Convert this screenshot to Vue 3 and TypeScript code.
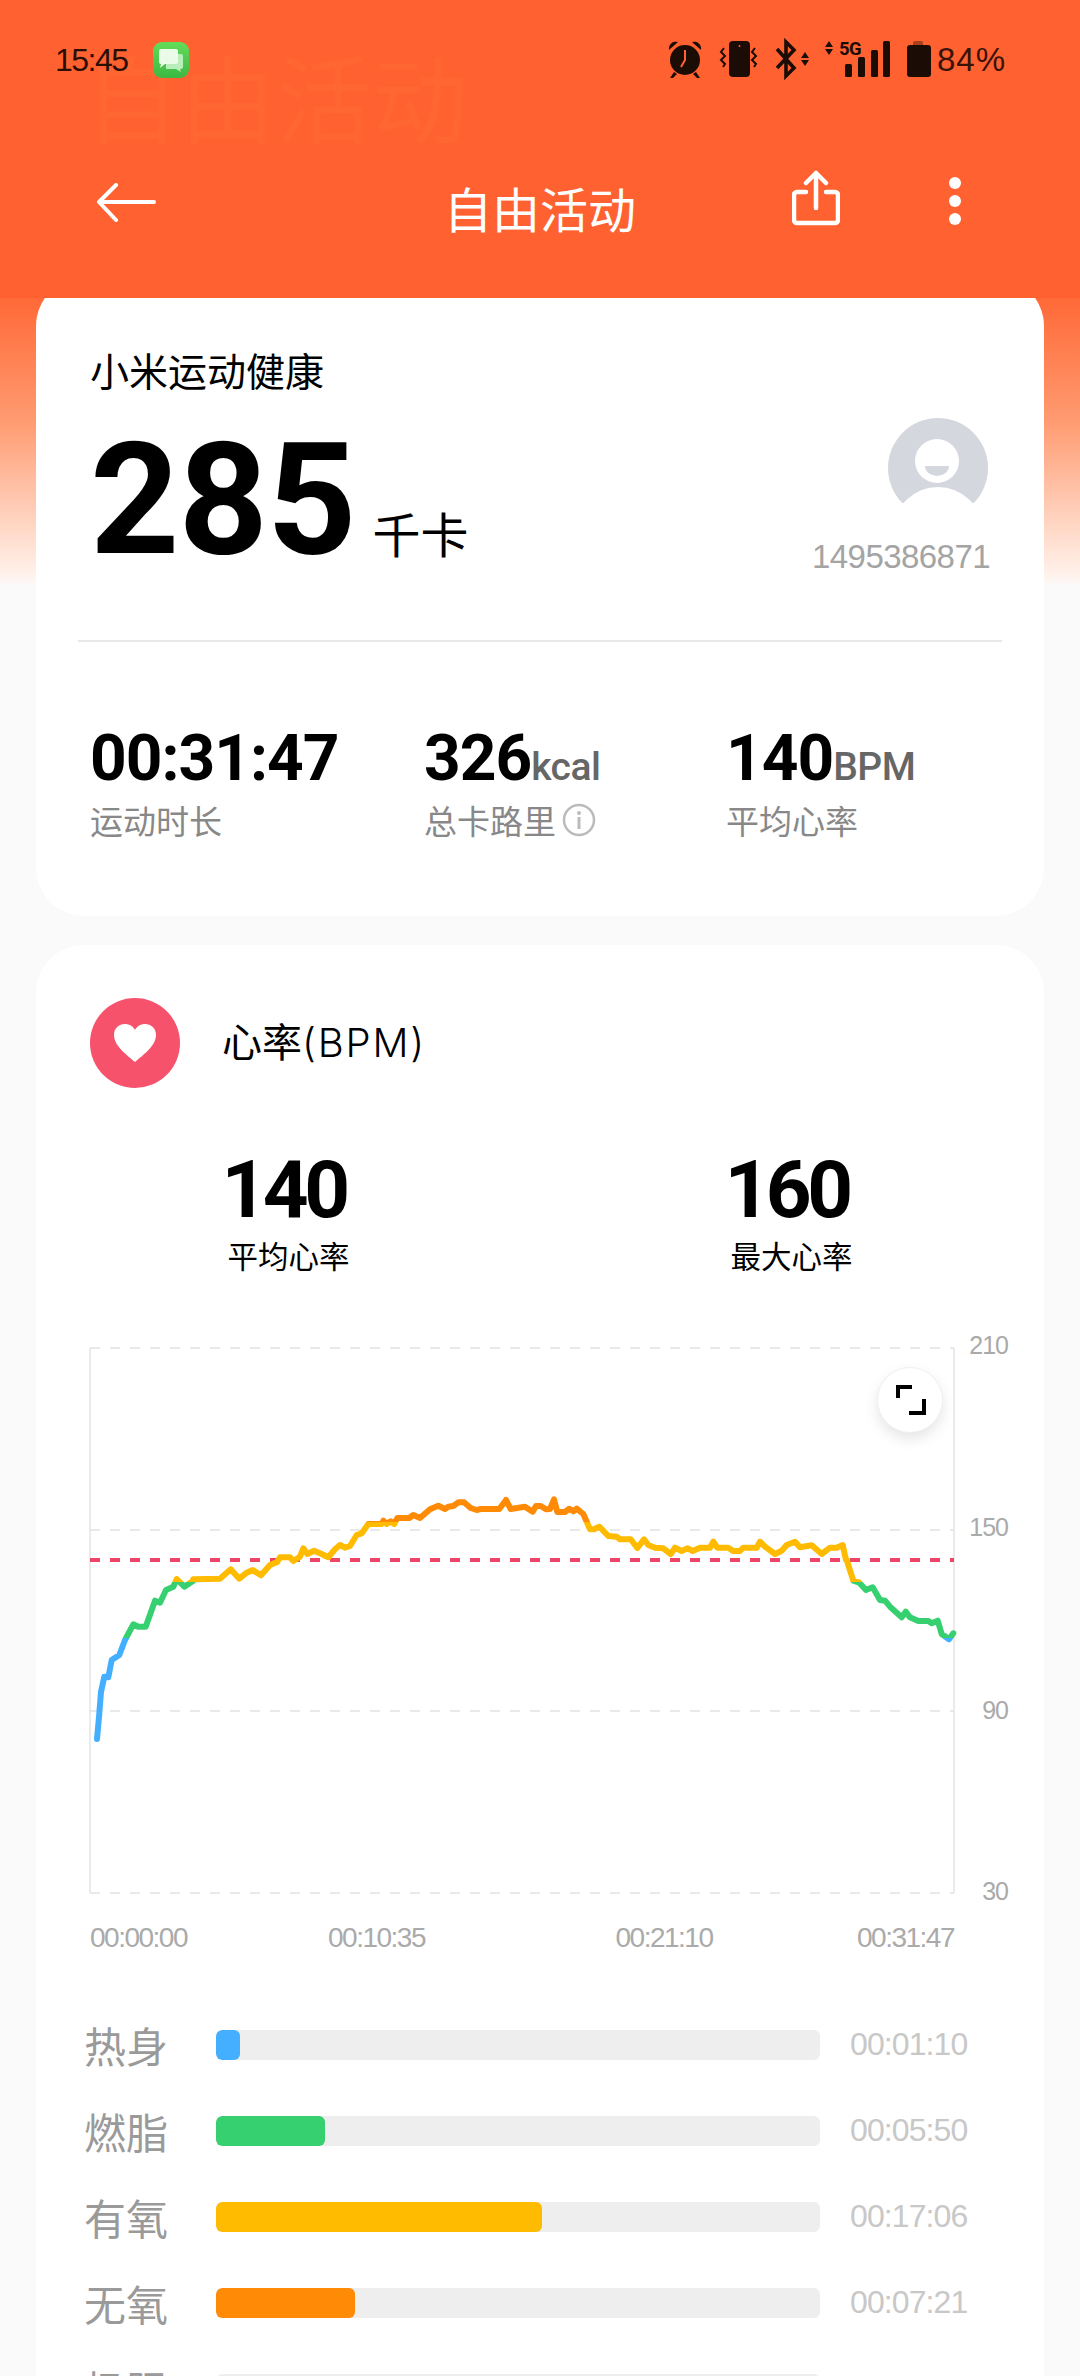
<script setup lang="ts">
type Pt = [number, number]

const left: Pt[] = [[97,1739],[99,1717],[101,1692],[104.3,1676.7],[108.3,1677.3],[111.7,1660],[119.3,1655],[125,1640],[133.3,1624.3],[138.3,1626.7],[145.7,1626.7],[155,1600.7],[160,1602.7],[166,1590],[173.3,1586.7],[176.7,1579],[184.3,1586.7],[193.3,1580.7]]
const midA: Pt[] = [[400,838],[480,836],[512,808],[538,836],[560,818],[578,810],[603,826],[630,795],[652,786],[660,772],[690,772],[700,783],[720,770],[730,745],[742,762],[762,752],[785,762],[805,772],[825,748],[840,735],[855,743],[870,738],[890,705],[905,700],[925,672],[965,672],[970,662],[980,672],[992,664],[1003,672],[1012,654],[1048,654],[1060,645],[1080,654],[1110,628],[1135,617],[1155,627],[1165,620],[1180,618],[1195,607],[1212,607],[1232,624],[1250,630],[1262,627],[1318,627],[1338,600],[1352,627],[1395,620],[1418,635],[1428,618],[1442,618]]
const midB: Pt[] = [[18,628],[30,627],[42,598],[52,636],[75,636],[88,626],[100,634],[110,626],[130,642],[150,688],[162,688],[178,680],[205,708],[230,710],[240,718],[272,718],[292,744],[312,718],[325,735],[345,743],[370,745],[392,762],[405,743],[425,753],[443,745],[458,753],[480,743],[510,743],[520,725],[532,743],[565,743],[580,753],[600,753],[610,743],[650,743],[660,725],[675,740],[705,762],[725,752],[740,735],[765,725],[780,742],[815,736],[845,762],[870,743],[890,743],[908,735],[918,780]]
const right: Pt[] = [[846.7,1560],[853.3,1580.7],[859.3,1582.7],[866,1590],[872.7,1587.3],[880,1600],[885,1600.7],[890,1606.7],[901.7,1617.3],[905.7,1611.7],[910,1617.3],[918.3,1621],[928.3,1621],[931.7,1623.3],[937.7,1620.7],[941.7,1634],[949,1639.3],[953.3,1633.3]]

const points: Pt[] = [
  ...left,
  ...midA.map(([x, y]): Pt => [60 + x / 3, 1300 + y / 3]),
  ...midB.map(([x, y]): Pt => [540 + x / 3, 1300 + y / 3]),
  ...right,
]
const linePath = points.map(([x, y], i) => `${i ? 'L' : 'M'}${x.toFixed(1)} ${y.toFixed(1)}`).join(' ')

const grid = [1348, 1530, 1711, 1893]
const yLabels = [
  { t: '210', y: 1354 },
  { t: '150', y: 1536 },
  { t: '90', y: 1719 },
  { t: '30', y: 1900 },
]
const ticks = ['00:00:00', '00:10:35', '00:21:10', '00:31:47']
const zones = [
  { name: '热身', color: '#45afff', width: 24, time: '00:01:10' },
  { name: '燃脂', color: '#36d070', width: 109, time: '00:05:50' },
  { name: '有氧', color: '#ffbb00', width: 326, time: '00:17:06' },
  { name: '无氧', color: '#ff8a05', width: 139, time: '00:07:21' },
  { name: '极限', color: '#f7526b', width: 0, time: '00:00:30' },
]
</script>

<template>
  <div class="page">
    <header class="header">
      <div class="ghost-title">自由活动</div>
      <div class="status">
        <div class="status-left">
          <span class="clock">15:45</span>
          <svg class="msg" width="36" height="36" viewBox="0 0 36 36">
            <defs>
              <linearGradient id="msgG" x1="0" y1="0" x2="0" y2="1">
                <stop offset="0" stop-color="#63dc58" />
                <stop offset="1" stop-color="#3cb843" />
              </linearGradient>
            </defs>
            <rect width="36" height="36" rx="9" fill="url(#msgG)" />
            <path d="M13 12h15a2 2 0 0 1 2 2v11a2 2 0 0 1-2 2h-1l1 3-5-3H13z" fill="#b9eebb" />
            <path d="M8 7h15a2 2 0 0 1 2 2v11a2 2 0 0 1-2 2H12l-5 4 1-4a2 2 0 0 1-2-2V9a2 2 0 0 1 2-2z" fill="#eafbe8" />
          </svg>
        </div>
        <svg class="status-right" width="340" height="40" viewBox="667 40 340 40">
          <g fill="#1c0c06">
            <circle cx="685" cy="60" r="15" />
            <path d="M669 50a7 7 0 0 1 9-8zM701 50a7 7 0 0 0-9-8z" />
            <path d="M674 72l-4 6h3l4-4zM696 72l4 6h-3l-4-4z" />
            <rect x="729" y="41" width="21" height="36" rx="4" />
            <path d="M825 47l4-6 4 6zM825 49l4 6 4-6z" />
            <path d="M801 58l4-6 4 6zM801 60l4 6 4-6z" />
            <rect x="845" y="64" width="7" height="13" rx="1.5" />
            <rect x="858" y="57" width="7" height="20" rx="1.5" />
            <rect x="871" y="50" width="7" height="27" rx="1.5" />
            <rect x="883" y="41" width="7" height="36" rx="1.5" />
            <path d="M907 48a3 3 0 0 1 3-3h18a3 3 0 0 1 3 3v26a3 3 0 0 1-3 3h-18a3 3 0 0 1-3-3z" />
          </g>
          <path d="M913 45v-2a2 2 0 0 1 2-2h6a2 2 0 0 1 2 2v2z" fill="#a8401c" />
          <circle cx="739.5" cy="46" r="1" fill="#ff6230" />
          <path d="M685 50v10l-4 7" fill="none" stroke="#ff6230" stroke-width="2" />
          <g fill="none" stroke="#1c0c06" stroke-width="2">
            <path d="M724 48l-3 4 4 4-4 4 4 4-2 3" />
            <path d="M755 48l-3 4 4 4-4 4 4 4-2 3" />
          </g>
          <path d="M777 49l17 19-8 8V42l8 8-17 18" fill="none" stroke="#1c0c06" stroke-width="3.6" />
          <text x="839" y="55" class="five-g">5G</text>
          <text x="937" y="71" class="batt">84%</text>
        </svg>
      </div>
      <nav class="nav">
        <svg class="back" width="60" height="40" viewBox="0 0 60 40">
          <path d="M58 19H4M20 2L3 19l17 18" fill="none" stroke="#fff" stroke-width="4" stroke-linecap="round" stroke-linejoin="round" />
        </svg>
        <h1 class="nav-title">自由活动</h1>
        <svg class="share" width="48" height="56" viewBox="0 0 48 56">
          <path d="M24 38V4M14 13L24 3l10 10" fill="none" stroke="#fff" stroke-width="4.5" stroke-linecap="round" stroke-linejoin="round" />
          <path d="M14 22H5a3 3 0 0 0-3 3v25a3 3 0 0 0 3 3h38a3 3 0 0 0 3-3V25a3 3 0 0 0-3-3h-9" fill="none" stroke="#fff" stroke-width="4.5" stroke-linecap="round" />
        </svg>
        <div class="dots"><i></i><i></i><i></i></div>
      </nav>
    </header>

    <main class="content">
      <section class="card summary">
        <div class="summary-top">
          <div>
            <div class="brand">小米运动健康</div>
            <div class="hero">
              <span class="hero-num">285</span>
              <span class="hero-unit">千卡</span>
            </div>
          </div>
          <div class="user">
            <svg width="100" height="86" viewBox="0 0 100 86">
              <circle cx="50" cy="50" r="50" fill="#d5d7de" />
              <circle cx="49" cy="43" r="22" fill="#fff" />
              <path d="M37 48h24a12 10 0 0 1-24 0z" fill="#d5d7de" />
              <ellipse cx="50" cy="112" rx="44" ry="43" fill="#fff" />
              <rect y="85" width="100" height="1" fill="#fff" />
            </svg>
            <div class="user-id">1495386871</div>
          </div>
        </div>
        <div class="divider"></div>
        <div class="stats">
          <div>
            <div class="stat-value">00:31:47</div>
            <div class="stat-label">运动时长</div>
          </div>
          <div>
            <div class="stat-value">326<span class="stat-unit">kcal</span></div>
            <div class="stat-label">
              总卡路里
              <svg class="info" width="34" height="34" viewBox="0 0 34 34">
                <circle cx="17" cy="17" r="15" fill="none" stroke="#bbb" stroke-width="2.5" />
                <circle cx="17" cy="10" r="2" fill="#bbb" />
                <rect x="15.5" y="14" width="3" height="12" fill="#bbb" />
              </svg>
            </div>
          </div>
          <div>
            <div class="stat-value">140<span class="stat-unit">BPM</span></div>
            <div class="stat-label">平均心率</div>
          </div>
        </div>
      </section>

      <section class="card heart">
        <div class="heart-head">
          <div class="heart-badge">
            <svg width="44" height="38" viewBox="0 0 44 38">
              <path d="M22 38C14 31 1 22 1 11 1 4 6 0 12 0c4 0 8 2 10 6 2-4 6-6 10-6 6 0 11 4 11 11 0 11-13 20-21 27z" fill="#fff" />
            </svg>
          </div>
          <div class="heart-title">心率<span class="heart-title-unit">(BPM)</span></div>
        </div>
        <div class="heart-stats">
          <div class="heart-stat">
            <div class="heart-num">140</div>
            <div class="heart-label">平均心率</div>
          </div>
          <div class="heart-stat">
            <div class="heart-num">160</div>
            <div class="heart-label">最大心率</div>
          </div>
        </div>

        <div class="chart">
          <svg class="chart-svg" width="1008" height="580" viewBox="36 1330 1008 580">
            <defs>
              <linearGradient id="zone" gradientUnits="userSpaceOnUse" x1="0" y1="1330" x2="0" y2="1760">
                <stop offset="0.4465" stop-color="#ff8a05" />
                <stop offset="0.4465" stop-color="#ffbb00" />
                <stop offset="0.586" stop-color="#ffbb00" />
                <stop offset="0.586" stop-color="#36d070" />
                <stop offset="0.716" stop-color="#36d070" />
                <stop offset="0.716" stop-color="#45afff" />
              </linearGradient>
            </defs>
            <line x1="90" y1="1348" x2="90" y2="1893" stroke="#e4e4e4" stroke-width="1.5" />
            <line x1="954" y1="1348" x2="954" y2="1893" stroke="#e4e4e4" stroke-width="1.5" />
            <line v-for="g in grid" :key="g" x1="90" x2="954" :y1="g" :y2="g" stroke="#e2e2e2" stroke-width="1.5" stroke-dasharray="10 10" />
            <line x1="90" x2="954" y1="1560" y2="1560" stroke="#ee4466" stroke-width="4" stroke-dasharray="10 10" />
            <path :d="linePath" fill="none" stroke="url(#zone)" stroke-width="6" stroke-linejoin="round" stroke-linecap="round" />
            <text v-for="l in yLabels" :key="l.t" x="1008" :y="l.y" text-anchor="end" class="y-label">{{ l.t }}</text>
          </svg>
          <button class="expand" type="button" aria-label="全屏">
            <svg width="30" height="30" viewBox="0 0 30 30">
              <path d="M2 13V2h14M28 14v14H13" fill="none" stroke="#000" stroke-width="4" />
            </svg>
          </button>
        </div>

        <div class="ticks">
          <span v-for="t in ticks" :key="t" class="tick">{{ t }}</span>
        </div>

        <div class="zones">
          <div v-for="z in zones" :key="z.name" class="zone">
            <span class="zone-name">{{ z.name }}</span>
            <div class="zone-track">
              <div class="zone-fill" :style="{ width: z.width + 'px', background: z.color }"></div>
            </div>
            <span class="zone-time">{{ z.time }}</span>
          </div>
        </div>
      </section>
    </main>
  </div>
</template>

<style>
html, body { margin: 0; background: #fafafa; }
</style>

<style scoped>
.page {
  width: 1080px;
  height: 2376px;
  overflow: hidden;
  background: linear-gradient(180deg, #ff6230 0, #ff6a38 300px, #ff9a70 420px, #ffd9c8 530px, #fff2ec 576px, #fafafa 586px) no-repeat;
  font-family: "Noto Sans CJK SC", Roboto, sans-serif;
  color: #000;
}
.header {
  position: relative;
  z-index: 2;
  height: 298px;
  background: #ff6230;
}
.ghost-title {
  position: absolute;
  left: 84px;
  top: 40px;
  font-size: 96px;
  line-height: 110px;
  color: #ff6632;
}
.status {
  position: relative;
  display: flex;
  justify-content: space-between;
  align-items: center;
  height: 40px;
  padding: 40px 73px 0 55px;
}
.status-left { display: flex; align-items: center; gap: 25px; }
.clock {
  font: 400 32px/40px "Liberation Sans", sans-serif;
  letter-spacing: -1.5px;
  color: #2a0e05;
}
.msg { display: block; }
.status-right { display: block; overflow: visible; }
.five-g { font: 700 18.5px "Roboto", sans-serif; fill: #1c0c06; letter-spacing: -0.5px; }
.batt { font: 400 33px "Liberation Sans", sans-serif; fill: #3a1208; letter-spacing: 1px; }
.nav {
  position: relative;
  display: flex;
  align-items: flex-start;
  height: 80px;
  margin-top: 91px;
}
.back { position: absolute; left: 96px; top: 12px; }
.nav-title {
  margin: 11px auto 0;
  font-size: 48px;
  font-weight: 400;
  line-height: 50px;
  color: #fff;
}
.share { position: absolute; left: 792px; top: -1px; }
.dots {
  position: absolute;
  left: 949px;
  top: 6px;
  display: flex;
  flex-direction: column;
  gap: 6px;
}
.dots i {
  display: block;
  width: 12px;
  height: 12px;
  border-radius: 50%;
  background: #fff;
}
.content {
  display: flex;
  flex-direction: column;
  gap: 29px;
  margin-top: -20px;
  padding: 0 36px;
}
.card {
  background: #fff;
  border-radius: 48px;
}
.summary {
  height: 638px;
  box-sizing: border-box;
  padding: 66px 0 0;
}
.summary-top {
  display: flex;
  justify-content: space-between;
  padding: 0 56px 0 54px;
}
.brand {
  font-size: 39px;
  line-height: 50px;
}
.hero {
  display: flex;
  align-items: baseline;
  gap: 17px;
  margin-top: 28px;
}
.hero-num {
  font: 700 156px/1 Roboto, sans-serif;
  letter-spacing: -1px;
}
.hero-unit { font-size: 48px; line-height: 1; }
.user {
  display: flex;
  flex-direction: column;
  align-items: flex-end;
  padding-top: 74px;
}
.user svg { display: block; }
.user-id {
  margin: 33px -2px 0 0;
  font: 400 33px/40px "Liberation Sans", sans-serif;
  letter-spacing: -0.55px;
  color: #a4a4a4;
}
.divider {
  height: 2px;
  margin: 62px 42px 0;
  background: #e8e8e8;
}
.stats {
  display: grid;
  grid-template-columns: 334px 302px 1fr;
  padding: 85px 0 0 54px;
}
.stat-value {
  font: 700 64px/1 Roboto, sans-serif;
  letter-spacing: -1px;
}
.stat-unit {
  font: 500 39px/1 Roboto, sans-serif;
  letter-spacing: -0.5px;
  color: #666;
}
.stat-label {
  display: flex;
  align-items: center;
  gap: 6px;
  margin-top: 9px;
  font-size: 33px;
  line-height: 40px;
  color: #888;
}
.heart {
  padding: 53px 0 0;
  height: 1500px;
}
.heart-head {
  display: flex;
  align-items: center;
  gap: 42px;
  padding-left: 54px;
}
.heart-badge {
  display: flex;
  align-items: center;
  justify-content: center;
  width: 90px;
  height: 90px;
  border-radius: 50%;
  background: #f7526b;
}
.heart-title {
  font-family: Inter, "Noto Sans CJK SC", sans-serif;
  font-size: 40px;
  line-height: 50px;
}
.heart-title-unit {
  font-weight: 300;
  letter-spacing: 1.8px;
}
.heart-stats {
  display: grid;
  grid-template-columns: 503px 503px;
  margin-top: 62px;
  padding-left: 1px;
}
.heart-stat { text-align: center; }
.heart-num {
  margin-right: 10px;
  font: 700 80px/1 Roboto, sans-serif;
  letter-spacing: -4.5px;
}
.heart-label {
  margin-top: 5px;
  font-size: 30.5px;
  line-height: 40px;
}
.chart {
  position: relative;
  margin-top: 55px;
  height: 580px;
}
.chart-svg { display: block; }
.y-label {
  font: 400 25px "Liberation Sans", sans-serif;
  fill: #aaa;
  letter-spacing: -1px;
}
.expand {
  position: absolute;
  left: 841px;
  top: 37px;
  display: flex;
  align-items: center;
  justify-content: center;
  width: 66px;
  height: 66px;
  padding: 0 0 0 2px;
  border: 1px solid #f0f0f0;
  border-radius: 50%;
  background: #fff;
  box-shadow: 0 6px 14px rgba(0, 0, 0, 0.1);
}
.ticks {
  display: flex;
  margin-top: 10px;
  padding-left: 54px;
}
.tick {
  font: 400 28px/36px "Liberation Sans", sans-serif;
  letter-spacing: -1.5px;
  color: #aaa;
  width: 97px;
  white-space: nowrap;
}
.tick:nth-child(2) { margin-left: 141px; }
.tick:nth-child(3) { margin-left: 190.5px; }
.tick:nth-child(4) { margin-left: 144.5px; }
.zones {
  margin-top: 46px;
  padding-left: 48px;
}
.zone {
  display: flex;
  align-items: center;
  height: 86px;
}
.zone-name {
  width: 132px;
  font-size: 42px;
  line-height: 50px;
  color: #9a9a9a;
}
.zone-track {
  width: 604px;
  height: 30px;
  border-radius: 6px;
  background: #eeeeee;
  overflow: hidden;
}
.zone-fill {
  height: 100%;
  border-radius: 6px;
}
.zone-time {
  margin: -2px 0 0 30px;
  font: 400 32px/40px "Liberation Sans", sans-serif;
  letter-spacing: -0.9px;
  color: #c8c8c8;
}
</style>
